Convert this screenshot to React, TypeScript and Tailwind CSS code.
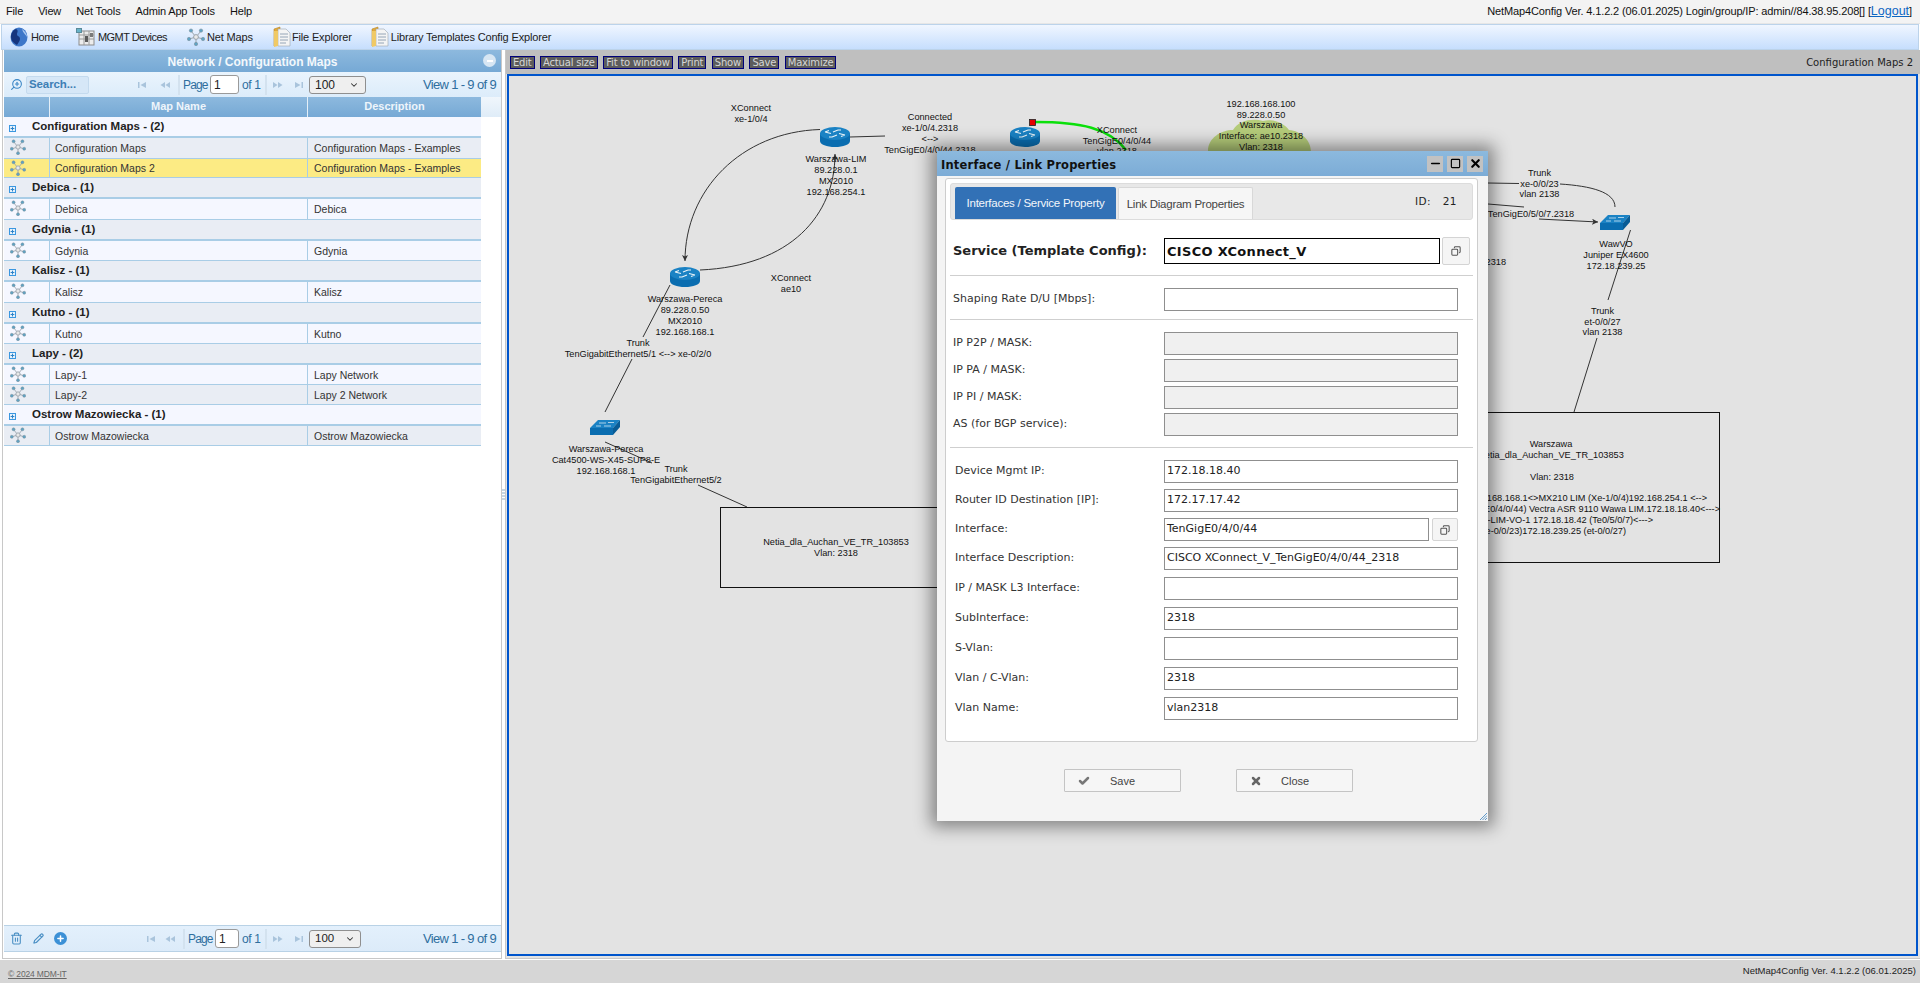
import { Check, Copy, Minus, Pencil, Plus, Square, Trash2, X, ZoomIn, ChevronDown } from 'lucide-react';

const menuItems = ['File', 'View', 'Net Tools', 'Admin App Tools', 'Help'];
const canvasButtons = ['Edit', 'Actual size', 'Fit to window', 'Print', 'Show', 'Save', 'Maximize'];

type GridRow = { kind: 'group' | 'item'; name: string; desc?: string; bg: string; h: string };
const LIGHT = 'bg-[#f5f7ff]';
const DARK = 'bg-[#e9edf4]';
const gridRows: GridRow[] = [
  { kind: 'group', name: 'Configuration Maps - (2)', bg: LIGHT, h: 'h-[21px]' },
  { kind: 'item', name: 'Configuration Maps', desc: 'Configuration Maps - Examples', bg: DARK, h: 'h-[21px]' },
  { kind: 'item', name: 'Configuration Maps 2', desc: 'Configuration Maps - Examples', bg: 'bg-[#fceb84]', h: 'h-[19px]' },
  { kind: 'group', name: 'Debica - (1)', bg: DARK, h: 'h-[21px]' },
  { kind: 'item', name: 'Debica', desc: 'Debica', bg: LIGHT, h: 'h-[21px]' },
  { kind: 'group', name: 'Gdynia - (1)', bg: DARK, h: 'h-[21px]' },
  { kind: 'item', name: 'Gdynia', desc: 'Gdynia', bg: LIGHT, h: 'h-[20px]' },
  { kind: 'group', name: 'Kalisz - (1)', bg: DARK, h: 'h-[21px]' },
  { kind: 'item', name: 'Kalisz', desc: 'Kalisz', bg: LIGHT, h: 'h-[21px]' },
  { kind: 'group', name: 'Kutno - (1)', bg: DARK, h: 'h-[21px]' },
  { kind: 'item', name: 'Kutno', desc: 'Kutno', bg: LIGHT, h: 'h-[20px]' },
  { kind: 'group', name: 'Lapy - (2)', bg: DARK, h: 'h-[21px]' },
  { kind: 'item', name: 'Lapy-1', desc: 'Lapy Network', bg: LIGHT, h: 'h-[20px]' },
  { kind: 'item', name: 'Lapy-2', desc: 'Lapy 2 Network', bg: DARK, h: 'h-[20px]' },
  { kind: 'group', name: 'Ostrow Mazowiecka - (1)', bg: LIGHT, h: 'h-[21px]' },
  { kind: 'item', name: 'Ostrow Mazowiecka', desc: 'Ostrow Mazowiecka', bg: DARK, h: 'h-[20px]' },
];

const lowerFields = [
  { label: 'Device Mgmt IP:', value: '172.18.18.40', mt: 'mt-[12px]' },
  { label: 'Router ID Destination [IP]:', value: '172.17.17.42', mt: 'mt-[6px]' },
  { label: 'Interface:', value: 'TenGigE0/4/0/44', mt: 'mt-[6px]', copy: true },
  { label: 'Interface Description:', value: 'CISCO XConnect_V_TenGigE0/4/0/44_2318', mt: 'mt-[6px]' },
  { label: 'IP / MASK L3 Interface:', value: '', mt: 'mt-[7px]' },
  { label: 'SubInterface:', value: '2318', mt: 'mt-[7px]' },
  { label: 'S-Vlan:', value: '', mt: 'mt-[7px]' },
  { label: 'Vlan / C-Vlan:', value: '2318', mt: 'mt-[7px]' },
  { label: 'Vlan Name:', value: 'vlan2318', mt: 'mt-[7px]' },
];

function NetMapIcon({ size = 17 }: { size?: number }) {
  return (
    <svg width={size} height={size} viewBox="0 0 18 18">
      <g stroke="#9aa3ab" strokeWidth="1" fill="none">
        <path d="M9 9L4 3M9 9L14 3M9 9L2 11M9 9L16 11M9 9L9 16" />
        <circle cx="9" cy="9" r="2.4" fill="#e8e8e8" />
      </g>
      <g fill="#5fa3c4" stroke="#7b8a95" strokeWidth="0.5">
        <circle cx="4" cy="2.6" r="1.7" />
        <circle cx="14" cy="2.6" r="1.7" />
        <circle cx="2" cy="11" r="1.7" />
        <circle cx="16" cy="11" r="1.7" />
        <circle cx="9" cy="16" r="1.7" />
      </g>
    </svg>
  );
}

function GlobeIcon() {
  return (
    <svg width="18" height="20" viewBox="0 0 18 20">
      <ellipse cx="9" cy="10" rx="8.5" ry="9.5" fill="#3d77c9" />
      <path d="M6 2C10 4 5 7 8 9C12 11 9 15 7 18C3 16 1 13 1 10C1 6 3 3 6 2Z" fill="#16357d" />
      <path d="M12 2C15 4 17 7 17 10C16 8 13 6 12 2Z" fill="#a9c8f0" />
    </svg>
  );
}

function DevicesIcon() {
  return (
    <svg width="19" height="18" viewBox="0 0 19 18">
      <rect x="3" y="3" width="15" height="14" fill="#ececec" stroke="#8b8b8b" />
      <rect x="0.5" y="0.5" width="5" height="4" fill="#67b3c9" stroke="#5a8a9a" />
      <path d="M3 7H18M3 11H18M8 3V17M13 3V17" stroke="#9a9a9a" />
      <rect x="9" y="8" width="3" height="6" fill="#5a5a5a" />
      <rect x="14" y="5" width="3" height="4" fill="#7a7a7a" />
    </svg>
  );
}

function FolderIcon() {
  return (
    <svg width="18" height="22" viewBox="0 0 18 22">
      <path d="M1 3L7 1V17L1 20Z" fill="#e0a93a" stroke="#b9862a" strokeWidth="0.6" />
      <path d="M5 3H13L17 7V20H5Z" fill="#f4f4f4" stroke="#9aa4ae" strokeWidth="0.6" />
      <path d="M7 8H15M7 11H15M7 14H15M7 17H13" stroke="#7f93a8" strokeWidth="0.8" />
      <path d="M1 5H5V20L1 21Z" fill="#f0c965" />
    </svg>
  );
}

function ExpandIcon() {
  return (
    <span className="flex h-[7px] w-[7px] items-center justify-center border border-[#3b97e0] bg-[#e8f3fc]">
      <Plus className="h-[5px] w-[5px] text-[#2e83c8]" strokeWidth={5} />
    </span>
  );
}

function PagerArrow({ flip, bar }: { flip?: boolean; bar?: boolean }) {
  return (
    <svg width="10" height="8" viewBox="0 0 10 8" className={flip ? '-scale-x-100' : ''}>
      {bar ? (
        <g fill="#a9c4dc">
          <rect x="1" y="1" width="1.5" height="6" />
          <path d="M9 1V7L3.5 4Z" />
        </g>
      ) : (
        <g fill="#a9c4dc">
          <path d="M5 1V7L0.5 4Z" />
          <path d="M10 1V7L5.5 4Z" />
        </g>
      )}
    </svg>
  );
}

function Pager({ selectClass, inputClass, leadClass, arrowGap }: { selectClass: string; inputClass: string; leadClass: string; arrowGap: string }) {
  return (
    <div className={`flex items-center text-[12px] tracking-[-0.85px] text-[#2e6e9e] ${leadClass}`}>
      <PagerArrow bar />
      <span className={arrowGap} />
      <PagerArrow />
      <span className="ml-[8px] mr-[3px] h-[20px] w-[2px] bg-[#d3e2ef]" />
      <span className="w-[24px]">Page</span>
      <span className={`ml-[3px] flex h-[19px] items-center rounded-[3px] border border-[#9a9a9a] bg-white pl-[3px] text-[#222] ${inputClass}`}>1</span>
      <span className="ml-[3px] w-[18px] whitespace-nowrap tracking-[-0.4px]">of 1</span>
      <span className="ml-[5px] h-[20px] w-[2px] bg-[#d3e2ef]" />
      <span className="ml-[6px]" />
      <PagerArrow flip />
      <span className="w-[11px]" />
      <PagerArrow flip bar />
      <span className={`ml-[5px] flex h-[18px] items-center justify-between rounded-[3px] border border-[#8f8f8f] bg-[#efefef] tracking-normal text-[#222] ${selectClass}`}>
        100
        <ChevronDown className="h-[10px] w-[10px] text-[#333]" strokeWidth={2.5} />
      </span>
    </div>
  );
}

function MapLabel({ x, y, lines, step = 11 }: { x: number; y: number; lines: string[]; step?: number }) {
  return (
    <text x={x} y={y} textAnchor="middle" fontSize="9.2" fill="#111" fontFamily="'Liberation Sans', sans-serif">
      {lines.map((line, i) => (
        <tspan key={i} x={x} dy={i === 0 ? 0 : step}>
          {line}
        </tspan>
      ))}
    </text>
  );
}

function Router({ x, y }: { x: number; y: number }) {
  return (
    <g transform={`translate(${x} ${y})`}>
      <path d="M0 6V14C0 17.5 6.7 20 15 20S30 17.5 30 14V6Z" fill="#0a6db0" />
      <ellipse cx="15" cy="6.5" rx="15" ry="6.5" fill="#1a82c4" />
      <path d="M5 5L11 6.5M9 3.5L5 5M25 8L19 6.5M21 9.5L25 8M12 10L17 8M9 10H12M18 3L13 5M18 3L21 3" stroke="#e8f2f8" strokeWidth="1.2" fill="none" />
    </g>
  );
}

function Switch({ x, y }: { x: number; y: number }) {
  return (
    <g transform={`translate(${x} ${y})`}>
      <path d="M0 8L8 0H30L23 8Z" fill="#1a82c4" />
      <path d="M0 8H23V15H0Z" fill="#0a6db0" />
      <path d="M23 8L30 0V7L23 15Z" fill="#085c96" />
      <path d="M9 3H16M14 6H21M6 6H11M18 2.5H24" stroke="#cfe4f2" strokeWidth="0.8" />
    </g>
  );
}

function NetworkDiagram() {
  return (
    <svg className="absolute left-0 top-0" width="1411" height="880" viewBox="508 76 1411 880">
      <defs>
        <marker id="arrow" markerWidth="8" markerHeight="8" refX="6" refY="3" orient="auto">
          <path d="M0 0L6 3L0 6L1.5 3Z" fill="#333" />
        </marker>
      </defs>
      <g fill="none" stroke="#333" strokeWidth="1">
        <path d="M819 129.5C740 132 684 190 684 261" markerEnd="url(#arrow)" />
        <path d="M699 270C790 266 834 215 834 154" markerEnd="url(#arrow)" />
        <path d="M849 137L884 136" />
        <path d="M669 285L642 337M631 359L604 412" />
        <path d="M604 442L651 463M697 485L746 507" />
        <path d="M1487 183L1518 183.5M1559 184C1590 186 1614 192 1614 207" />
        <path d="M1487 204L1523 207M1538 219L1597 222" markerEnd="url(#arrow)" />
        <path d="M1629.5 230L1607 300M1596 338L1573 412" />
      </g>
      <rect x="719.5" y="507.5" width="400" height="80" fill="none" stroke="#111" strokeWidth="1" />
      <rect x="1350.5" y="412.5" width="368" height="150" fill="none" stroke="#111" strokeWidth="1" />
      <path d="M1207 151C1207 138 1220 130 1232 130C1238 120 1252 118 1262 121C1272 118 1284 124 1288 130C1300 131 1310 140 1310 152Z" fill="#b5cc7a" />
      <path d="M1034 122C1080 122 1108 128 1125 150" fill="none" stroke="#0be00b" strokeWidth="2.5" />
      <rect x="1028.5" y="119.5" width="6" height="6" fill="#e60000" stroke="#222" strokeWidth="0.8" />
      <Router x={819} y={127} />
      <Router x={669} y={267} />
      <Router x={1009} y={127} />
      <Switch x={589} y={420} />
      <Switch x={1599} y={215} />
      <MapLabel x={750} y={111} lines={['XConnect', 'xe-1/0/4']} />
      <MapLabel x={929} y={120} lines={['Connected', 'xe-1/0/4.2318', '<-->', 'TenGigE0/4/0/44.2318']} />
      <MapLabel x={835} y={162} lines={['Warszawa-LIM', '89.228.0.1', 'MX2010', '192.168.254.1']} />
      <MapLabel x={790} y={281} lines={['XConnect', 'ae10']} />
      <MapLabel x={684} y={302} lines={['Warszawa-Pereca', '89.228.0.50', 'MX2010', '192.168.168.1']} />
      <MapLabel x={637} y={346} lines={['Trunk', 'TenGigabitEthernet5/1 <--> xe-0/2/0']} />
      <MapLabel x={605} y={452} lines={['Warszawa-Pereca', 'Cat4500-WS-X45-SUP8-E', '192.168.168.1']} />
      <MapLabel x={675} y={472} lines={['Trunk', 'TenGigabitEthernet5/2']} />
      <MapLabel x={835} y={545} lines={['Netia_dla_Auchan_VE_TR_103853', 'Vlan: 2318']} />
      <MapLabel x={1116} y={133} lines={['XConnect', 'TenGigE0/4/0/44', 'vlan 2318']} step={10.5} />
      <MapLabel x={1260} y={107} lines={['192.168.168.100', '89.228.0.50', 'Warszawa', 'Interface: ae10.2318', 'Vlan: 2318']} step={10.7} />
      <MapLabel x={1538.5} y={176} lines={['Trunk', 'xe-0/0/23', 'vlan 2138']} step={10.5} />
      <MapLabel x={1530} y={217} lines={['TenGigE0/5/0/7.2318']} />
      <MapLabel x={1615} y={247} lines={['WawVO', 'Juniper EX4600', '172.18.239.25']} />
      <MapLabel x={1601.5} y={314} lines={['Trunk', 'et-0/0/27', 'vlan 2138']} step={10.5} />
      <MapLabel x={1550} y={447} lines={['Warszawa', 'Netia_dla_Auchan_VE_TR_103853']} />
      <MapLabel x={1551} y={480} lines={['Vlan: 2318']} />
      <text x={1505} y={265} textAnchor="end" fontSize="9.2" fill="#111" fontFamily="'Liberation Sans', sans-serif">vlan 2318</text>
      <g textAnchor="end" fontSize="9.2" fill="#111" fontFamily="'Liberation Sans', sans-serif">
        <text x={1706} y={501}>192.168.168.1&lt;&gt;MX210 LIM (Xe-1/0/4)192.168.254.1 &lt;--&gt;</text>
        <text x={1719} y={512}>(TenGigE0/4/0/44) Vectra ASR 9110 Wawa LIM.172.18.18.40&lt;---&gt;</text>
        <text x={1652} y={523}>WAW-LIM-VO-1 172.18.18.42 (Te0/5/0/7)&lt;---&gt;</text>
        <text x={1625} y={534}>(xe-0/0/23)172.18.239.25 (et-0/0/27)</text>
      </g>
    </svg>
  );
}

function FormInput({ value = '', widthClass = 'w-[294px]', disabled }: { value?: string; widthClass?: string; disabled?: boolean }) {
  return (
    <div className={`flex h-[23px] shrink-0 items-center border border-[#8f8f8f] pl-[2px] ${widthClass} ${disabled ? 'bg-[#f0f0f0]' : 'bg-white'}`}>
      {value}
    </div>
  );
}

function CopyButton({ className }: { className: string }) {
  return (
    <div className={`flex items-center justify-center rounded-[2px] border border-[#d4d4d4] bg-[#f5f5f5] ${className}`}>
      <Copy className="h-[10px] w-[10px] -scale-x-100 text-[#555]" strokeWidth={2.5} />
    </div>
  );
}

function PropertiesDialog() {
  return (
    <div className="absolute left-[937px] top-[151px] h-[670px] w-[551px] bg-[#f4f4f4] text-[11px] text-[#222] shadow-[0_0_16px_6px_rgba(0,0,0,0.42)] font-['DejaVu_Sans',sans-serif]">
      <div className="flex h-[25px] items-center justify-between bg-gradient-to-b from-[#8cb9de] to-[#7cacd6] pl-[4px] pr-[5px]">
        <span className="pt-[4px] text-[11.5px] font-bold tracking-[0.2px] text-[#111]">Interface / Link Properties</span>
        <div className="flex gap-[4px]">
          <span className="flex h-[16px] w-[16px] items-center justify-center bg-[#c2c2c2]"><Minus className="h-[13px] w-[13px] text-black" strokeWidth={3} /></span>
          <span className="flex h-[16px] w-[16px] items-center justify-center bg-[#c2c2c2]"><Square className="h-[11px] w-[11px] text-black" strokeWidth={2.5} /></span>
          <span className="flex h-[16px] w-[16px] items-center justify-center bg-[#c2c2c2]"><X className="h-[13px] w-[13px] text-black" strokeWidth={4} /></span>
        </div>
      </div>
      <div className="ml-[8px] mt-[2px] h-[564px] w-[533px] rounded-[3px] border border-[#cdcdcd] bg-white px-[4px] pt-[4px]">
        <div className="flex h-[37px] items-end justify-between rounded-[3px] border border-[#dcdcdc] bg-[#e8e8e8] pl-[4px] pr-[15px] font-['Liberation_Sans',sans-serif] text-[11.5px] tracking-[-0.25px]">
          <div className="flex gap-[2px]">
            <span className="flex h-[32px] w-[161px] items-center justify-center rounded-t-[2px] bg-[#3271b6] pt-[2px] text-[#f2f6fb]">Interfaces / Service Property</span>
            <span className="flex h-[32px] w-[135px] items-center justify-center rounded-t-[2px] border border-b-0 border-[#d8d8d8] bg-[#f6f6f6] pt-[2px] text-[#444]">Link Diagram Properties</span>
          </div>
          <span className="mb-[9px] font-['DejaVu_Sans',sans-serif] text-[10.5px] tracking-[0.5px] text-[#222]">ID:&nbsp;&nbsp; 21</span>
        </div>
        <div className="mt-[17px] flex items-center pl-[3px]">
          <span className="w-[211px] shrink-0 text-[13px] font-bold text-[#222]">Service (Template Config):</span>
          <div className="flex h-[26px] w-[276px] items-center border border-black pl-[2px] pt-[1px] text-[13px] font-bold tracking-[0.3px] text-[#111]">CISCO XConnect_V</div>
          <CopyButton className="ml-[2px] h-[28px] w-[28px]" />
        </div>
        <div className="mt-[10px] h-px bg-[#cfcfcf]" />
        <div className="mt-[12px] flex items-center pl-[3px]">
          <span className="w-[211px] shrink-0 text-[#333]">Shaping Rate D/U [Mbps]:</span>
          <FormInput />
        </div>
        <div className="mt-[8px] h-px bg-[#cfcfcf]" />
        <div className="mt-[12px] flex flex-col gap-[4px] pl-[3px]">
          {['IP P2P / MASK:', 'IP PA / MASK:', 'IP PI / MASK:', 'AS (for BGP service):'].map((label) => (
            <div key={label} className="flex items-center">
              <span className="w-[211px] shrink-0 text-[#333]">{label}</span>
              <FormInput disabled />
            </div>
          ))}
        </div>
        <div className="mt-[11px] h-px bg-[#cfcfcf]" />
        {lowerFields.map((field) => (
          <div key={field.label} className={`flex items-center pl-[5px] ${field.mt}`}>
            <span className="w-[209px] shrink-0 text-[#333]">{field.label}</span>
            {field.copy ? (
              <>
                <FormInput value={field.value} widthClass="w-[265px]" />
                <CopyButton className="ml-[3px] h-[23px] w-[26px]" />
              </>
            ) : (
              <FormInput value={field.value} />
            )}
          </div>
        ))}
      </div>
      <div className="ml-[127px] mt-[27px] flex gap-[55px] font-['Liberation_Sans',sans-serif] text-[11px] text-[#444]">
        <div className="flex h-[23px] w-[117px] items-center rounded-[1px] border border-[#c4c4c4] bg-[#f6f6f6] pl-[13px]">
          <Check className="h-[12px] w-[12px] text-[#777]" strokeWidth={5} />
          <span className="ml-[20px] pt-[1px]">Save</span>
        </div>
        <div className="flex h-[23px] w-[117px] items-center rounded-[1px] border border-[#c4c4c4] bg-[#f6f6f6] pl-[13px]">
          <X className="h-[12px] w-[12px] text-[#666]" strokeWidth={5} />
          <span className="ml-[19px] pt-[1px]">Close</span>
        </div>
      </div>
      <svg className="absolute bottom-[1px] right-[1px]" width="7" height="7" viewBox="0 0 7 7">
        <path d="M0 7L7 0M2.5 7L7 2.5M5 7L7 5" stroke="#4f8fc4" strokeWidth="0.9" />
      </svg>
    </div>
  );
}

export default function App() {
  return (
    <div className="relative flex h-[993px] w-[1920px] flex-col overflow-hidden bg-white font-['Liberation_Sans',sans-serif]">
      {/* Menu */}
      <div className="flex h-[24px] shrink-0 justify-between border-b border-[#e6e6e6] bg-[#f3f3f3] pl-[6px] pr-[8px] pt-[5px] text-[11px] leading-[13px] text-[#111]">
        <div className="flex gap-[15px] tracking-[-0.15px]">
          {menuItems.map((item) => (
            <span key={item}>{item}</span>
          ))}
        </div>
        <span className="tracking-[-0.13px]">
          NetMap4Config Ver. 4.1.2.2 (06.01.2025) Login/group/IP: admin//84.38.95.208[] [<span className="text-[12.5px] tracking-normal text-[#0b66c3] underline">Logout</span>]
        </span>
      </div>

      {/* Toolbar */}
      <div className="mx-[1px] flex h-[26px] shrink-0 items-center border border-[#bcd3ea] bg-gradient-to-b from-[#f0f6ff] to-[#c6defd] pl-[8px] text-[11px] tracking-[-0.15px] text-[#222]">
        <GlobeIcon />
        <span className="ml-[3px] w-[27px] tracking-[-0.4px]">Home</span>
        <span className="ml-[18px]"><DevicesIcon /></span>
        <span className="ml-[3px] w-[69px] tracking-[-0.55px]">MGMT Devices</span>
        <span className="ml-[20px]"><NetMapIcon size={18} /></span>
        <span className="ml-[2px]">Net Maps</span>
        <span className="ml-[20px]"><FolderIcon /></span>
        <span className="ml-[1px]">File Explorer</span>
        <span className="ml-[19px]"><FolderIcon /></span>
        <span className="ml-[2px]">Library Templates Config Explorer</span>
      </div>

      <div className="flex h-[909px] shrink-0">
        {/* Left panel */}
        <div className="ml-[2px] flex w-[500px] shrink-0 flex-col border-b border-r border-l border-[#c8c8c8] bg-white pb-[6px] pl-[1px]">
          <div className="relative flex h-[22px] shrink-0 items-center justify-center bg-gradient-to-b from-[#8db9de] to-[#76a9d5] pt-[1px] text-[12px] font-bold text-[#f3f8fc]">
            Network / Configuration Maps
            <span className="absolute right-[5px] top-[4px] flex h-[13px] w-[13px] items-center justify-center rounded-full bg-[#d7e6f3]">
              <span className="h-[2px] w-[6px] bg-white" />
            </span>
          </div>
          <div className="relative flex h-[25px] shrink-0 items-center bg-gradient-to-b from-[#eaf4fd] to-[#dcecfa] pl-[6px]">
            <ZoomIn className="h-[13px] w-[13px] -scale-x-100 text-[#3a86c6]" strokeWidth={2} />
            <span className="ml-[3px] flex h-[18px] w-[63px] items-center rounded-[2px] border border-[#c4daee] bg-[#d6e7f7] pl-[2px] text-[11.5px] font-bold tracking-[-0.1px] text-[#3e7fb5]">Search...</span>
            <Pager leadClass="ml-[48px]" arrowGap="w-[13px]" inputClass="w-[29px]" selectClass="w-[57px] pl-[5px] pr-[6px]" />
            <span className="absolute right-[5px] text-[13px] tracking-[-0.65px] text-[#2e6e9e]">View 1 - 9 of 9</span>
          </div>
          <div className="flex h-[20px] shrink-0 text-[11px] font-bold text-[#eef5fb]">
            <div className="w-[46px] border-r border-[#e4eff8] bg-gradient-to-b from-[#8db9de] to-[#76a9d5]" />
            <div className="flex w-[258px] items-center justify-center border-r border-[#e4eff8] bg-gradient-to-b from-[#8db9de] to-[#76a9d5] pb-[2px]">Map Name</div>
            <div className="flex w-[173px] items-center justify-center bg-gradient-to-b from-[#8db9de] to-[#76a9d5] pb-[2px]">Description</div>
            <div className="flex-1 bg-gradient-to-b from-[#f0f6fc] to-[#dfecf8]" />
          </div>
          <div className="flex min-h-0 flex-1 flex-col">
            {gridRows.map((row) => (
              <div key={row.name + row.h + row.bg} className={`flex w-[477px] shrink-0 border-[#a9cde6] ${row.kind === 'group' ? 'border-b-2' : 'border-b'} ${row.bg} ${row.h}`}>
                {row.kind === 'group' ? (
                  <>
                    <div className="flex w-[28px] items-center pl-[5px] pt-[3px]">
                      <ExpandIcon />
                    </div>
                    <span className="self-center text-[11.5px] font-bold text-[#222]">{row.name}</span>
                  </>
                ) : (
                  <>
                    <div className="flex w-[46px] shrink-0 items-start border-r border-[#a9cde6] pl-[6px] pt-[1px]">
                      <NetMapIcon size={16} />
                    </div>
                    <div className="flex w-[258px] shrink-0 items-center border-r border-[#a9cde6] pl-[5px] pt-[2px] text-[10.5px] text-[#333]">{row.name}</div>
                    <div className="flex items-center pl-[6px] pt-[2px] text-[10.5px] text-[#333]">{row.desc}</div>
                  </>
                )}
              </div>
            ))}
          </div>
          <div className="relative flex h-[27px] shrink-0 items-center border-y border-[#b9d2e6] bg-gradient-to-b from-[#e3f0fc] to-[#dcebf9] pl-[6px]">
            <Trash2 className="h-[13px] w-[13px] text-[#4a8fc4]" strokeWidth={2} />
            <Pencil className="ml-[10px] h-[11px] w-[11px] text-[#4a8fc4]" strokeWidth={2.5} />
            <span className="ml-[10px] flex h-[13px] w-[13px] items-center justify-center rounded-full bg-[#3b90d6]">
              <Plus className="h-[9px] w-[9px] text-white" strokeWidth={4} />
            </span>
            <Pager leadClass="ml-[79px]" arrowGap="w-[9px]" inputClass="w-[24px]" selectClass="w-[52px] pl-[5px] pr-[5px] text-[11.5px]" />
            <span className="absolute right-[5px] text-[13px] tracking-[-0.65px] text-[#2e6e9e]">View 1 - 9 of 9</span>
          </div>
        </div>

        {/* Splitter */}
        <div className="flex w-[3px] shrink-0 flex-col items-center justify-center gap-[1px] bg-white pb-[20px]">
          {[0, 1, 2, 3].map((n) => (
            <span key={n} className="h-[2px] w-[3px] bg-[#c5d5e3]" />
          ))}
        </div>

        {/* Map panel */}
        <div className="flex min-w-0 flex-1 flex-col border-b border-l border-[#c8c8c8] bg-[#e3e3e3] pb-[2px]">
          <div className="flex h-[24px] shrink-0 items-center justify-between bg-[#bfbfbf] pl-[4px] pr-[7px] font-['DejaVu_Sans',sans-serif] text-[10px]">
            <div className="flex gap-[5.5px] tracking-[-0.2px]">
              {canvasButtons.map((label) => (
                <span key={label} className="flex h-[13px] items-center border border-[#00007a] bg-[#5c5c5c] px-[2px] text-[#d6d6d6]">
                  {label}
                </span>
              ))}
            </div>
            <span className="text-[#222]">Configuration Maps 2</span>
          </div>
          <div className="relative ml-[1px] mr-[2px] min-h-0 flex-1 overflow-hidden border-2 border-[#0055cc] bg-[#e3e3e3]">
            <NetworkDiagram />
          </div>
        </div>
      </div>

      {/* Footer */}
      <div className="mt-[1px] flex h-[23px] shrink-0 items-center justify-between bg-[#d6d6d6] pl-[8px] pr-[4px]">
        <span className="pt-[5px] text-[8.5px] tracking-[-0.15px] text-[#666] underline">© 2024 MDM-IT</span>
        <span className="text-[9.5px] text-[#222]">NetMap4Config Ver. 4.1.2.2 (06.01.2025)</span>
      </div>

      <PropertiesDialog />
    </div>
  );
}
